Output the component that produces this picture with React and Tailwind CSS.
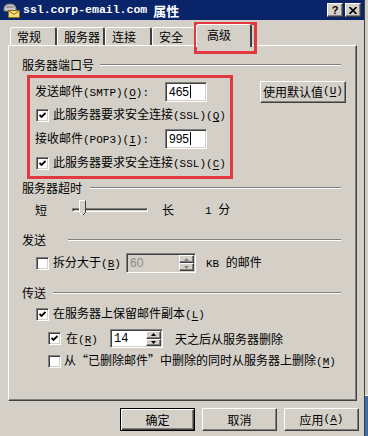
import React from "react";

// classic win9x bevels
const raised =
  "border border-t-white border-l-white border-r-[#404040] border-b-[#404040] shadow-[inset_-1px_-1px_0_#808080]";
const sunken =
  "border border-t-[#808080] border-l-[#808080] border-r-white border-b-white shadow-[inset_1px_1px_0_#404040,inset_-1px_-1px_0_#d4d0c8]";

// "_X" marks an underlined access key, ascii runs get the mono face
const Txt = ({ s }) => {
  const out = [];
  const re = /_(.)|([\x20-\x5e\x60-\x7e]+)|([^\x20-\x7e]+)/g;
  let m;
  let i = 0;
  while ((m = re.exec(s))) {
    if (m[1]) {
      out.push(
        <span key={i++} className="font-['Liberation_Mono'] text-[11px] underline underline-offset-[2px]">
          {m[1]}
        </span>
      );
    } else if (m[2]) {
      out.push(
        <span key={i++} className="font-['Liberation_Mono'] text-[11px]">
          {m[2]}
        </span>
      );
    } else {
      out.push(<span key={i++}>{m[3]}</span>);
    }
  }
  return <>{out}</>;
};

const Check = ({ checked }) => (
  <div className={`w-[13px] h-[13px] shrink-0 bg-white flex items-center justify-center ${sunken}`}>
    {checked && (
      <svg width="7" height="7" viewBox="0 0 7 7">
        <path d="M0.5 3 L2.5 5 L6.5 1" stroke="#000" strokeWidth="1.8" fill="none" />
      </svg>
    )}
  </div>
);

const Header = ({ label, labelClass }) => (
  <div className="h-[14px] flex items-center ml-[13px] mr-[15px]">
    <div className={`${labelClass} shrink-0 leading-[14px] whitespace-nowrap`}>{label}</div>
    <div className="flex-1 h-[2px] border-t border-t-[#808080] border-b border-b-white" />
  </div>
);

const Arrow = ({ up, color }) => (
  <svg width="5" height="3" viewBox="0 0 5 3">
    {up ? <path d="M2.5 0 L5 3 L0 3 Z" fill={color} /> : <path d="M0 0 L5 0 L2.5 3 Z" fill={color} />}
  </svg>
);

const Spin = ({ value, disabled, widthClass, heightClass }) => (
  <div
    className={`${widthClass} ${heightClass} flex items-stretch ${sunken} ${
      disabled ? "bg-[#d4d0c8]" : "bg-white"
    }`}
  >
    <div
      className={`flex-1 flex items-center pl-[3px] font-['Liberation_Mono'] text-[12px] ${
        disabled ? "text-[#8a8a8a] font-['Liberation_Sans']" : "text-black"
      }`}
    >
      {value}
    </div>
    <div className="w-[15px] flex flex-col my-[1px] mr-[1px]">
      <div className={`flex-1 flex items-center justify-center bg-[#d4d0c8] ${raised}`}>
        <Arrow up color={disabled ? "#808080" : "#000"} />
      </div>
      <div className={`flex-1 flex items-center justify-center bg-[#d4d0c8] ${raised}`}>
        <Arrow color={disabled ? "#808080" : "#000"} />
      </div>
    </div>
  </div>
);

const Field = ({ value }) => (
  <div className={`w-[42px] h-[20px] bg-white flex items-center pl-[3px] ${sunken}`}>
    <span className="font-['Liberation_Sans'] text-[12px] leading-none">{value}</span>
    <span className="w-px h-[13px] bg-black ml-px" />
  </div>
);

const tabs = [
  { label: "常规", w: "w-[47px]" },
  { label: "服务器", w: "w-[48px]" },
  { label: "连接", w: "w-[47px]" },
  { label: "安全", w: "w-[46px]" },
];

const App = () => {
  return (
    <div className="relative w-[368px] h-[436px] overflow-hidden flex bg-[#d4d0c8] text-black text-[12px] font-['Noto_Sans_CJK_SC',sans-serif]">
      {/* dialog window */}
      <div className="w-[365px] h-full flex flex-col border-r border-[#404040]">
        {/* title bar */}
        <div className="h-[20px] bg-[#0a246a] flex items-center pl-[3px] pr-[3px]">
          <svg width="18" height="16" viewBox="0 0 18 16">
            <path d="M1 7 Q1 2 7 2 Q13 2 13 7 L13 9 L1 9 Z" fill="#c8c8c8" stroke="#7a7a7a" />
            <rect x="3" y="4" width="8" height="2" fill="#9a9a9a" />
            <rect x="5.5" y="8.5" width="11" height="7" fill="#f3dc7a" stroke="#8a6a20" />
            <path d="M5.5 8.5 L11 12.5 L16.5 8.5" stroke="#8a6a20" fill="none" />
          </svg>
          <div className="ml-[2px] text-white font-bold whitespace-nowrap flex items-center">
            <span className="font-['Liberation_Mono'] text-[11.5px]">ssl.corp-email.com</span>
            <span className="ml-[6px] text-[13px] leading-none">属性</span>
          </div>
          <div className="ml-auto flex gap-[2px]">
            <div className={`w-[16px] h-[14px] bg-[#d4d0c8] flex items-center justify-center ${raised}`}>
              <span className="font-['Liberation_Sans'] font-bold text-[11px] leading-none">?</span>
            </div>
            <div className={`w-[16px] h-[14px] bg-[#d4d0c8] flex items-center justify-center ${raised}`}>
              <svg width="8" height="7" viewBox="0 0 8 7">
                <path d="M0.5 0 L7.5 7 M7.5 0 L0.5 7" stroke="#000" strokeWidth="1.6" />
              </svg>
            </div>
          </div>
        </div>

        {/* tabs */}
        <div className="h-[25px] flex items-end pl-[10px]">
          {tabs.map((t) => (
            <div
              key={t.label}
              className={`${t.w} h-[18px] pl-[6px] flex items-center border-t border-l border-t-white border-l-white border-r-2 border-r-[#404040] rounded-t-[3px] leading-[14px]`}
            >
              {t.label}
            </div>
          ))}
          <div className="relative z-10 -ml-[2px] -mb-[2px] w-[56px] h-[23px] pl-[10px] pt-[3px] bg-[#d4d0c8] border-t border-l border-t-white border-l-white border-r-2 border-r-[#404040] rounded-t-[3px] leading-[14px]">
            高级
          </div>
        </div>

        {/* tab panel */}
        <div className="ml-[8px] w-[349px] h-[356px] border border-t-white border-l-white border-r-[#404040] border-b-[#404040] shadow-[inset_-1px_-1px_0_#808080] flex flex-col pt-[12px]">
          <Header label="服务器端口号" labelClass="w-[78px]" />

          <div className="mt-[9px] h-[21px] flex items-center">
            <div className="ml-[26px] w-[130px] leading-[14px] whitespace-nowrap">
              <Txt s="发送邮件(SMTP)(_O):" />
            </div>
            <Field value="465" />
            <div className={`ml-[53px] w-[86px] h-[22px] flex items-center justify-center whitespace-nowrap ${raised}`}>
              <Txt s="使用默认值(_U)" />
            </div>
          </div>

          <div className="mt-[6px] h-[14px] flex items-center ml-[27px]">
            <Check checked />
            <span className="ml-[4px] leading-[14px] whitespace-nowrap">
              <Txt s="此服务器要求安全连接(SSL)(_Q)" />
            </span>
          </div>

          <div className="mt-[6px] h-[21px] flex items-center">
            <div className="ml-[26px] w-[130px] leading-[14px] whitespace-nowrap">
              <Txt s="接收邮件(POP3)(_I):" />
            </div>
            <Field value="995" />
          </div>

          <div className="mt-[7px] h-[14px] flex items-center ml-[27px]">
            <Check checked />
            <span className="ml-[4px] leading-[14px] whitespace-nowrap">
              <Txt s="此服务器要求安全连接(SSL)(_C)" />
            </span>
          </div>

          <div className="mt-[11px]">
            <Header label="服务器超时" labelClass="w-[68px]" />
          </div>

          <div className="mt-[7px] h-[16px] flex items-center">
            <span className="ml-[26px] leading-[14px]">短</span>
            <div className="relative ml-[25px] w-[76px] h-[16px] flex items-center">
              <div className="w-full h-[4px] border border-t-[#808080] border-l-[#808080] border-r-white border-b-white bg-[#d4d0c8] shadow-[inset_1px_1px_0_#404040]" />
              <svg className="absolute left-[7px] top-[-2px]" width="7" height="16" viewBox="0 0 7 16">
                <path d="M0.5 0.5 L6.5 0.5 L6.5 12.5 L3.5 15.5 L0.5 12.5 Z" fill="#d4d0c8" />
                <path d="M0.5 12.5 L0.5 0.5 L6.5 0.5" stroke="#fff" fill="none" />
                <path d="M6.5 0.5 L6.5 12.5 L3.5 15.5" stroke="#404040" fill="none" />
                <path d="M3.5 15.5 L0.5 12.5" stroke="#fff" fill="none" />
              </svg>
            </div>
            <span className="ml-[14px] leading-[14px]">长</span>
            <span className="ml-[31px] leading-[14px] whitespace-nowrap">
              <Txt s="1 分" />
            </span>
          </div>

          <div className="mt-[15px]">
            <Header label="发送" labelClass="w-[46px]" />
          </div>

          <div className="mt-[6px] h-[20px] flex items-center ml-[27px]">
            <Check />
            <span className="ml-[4px] w-[73px] leading-[14px] whitespace-nowrap">
              <Txt s="拆分大于(_B)" />
            </span>
            <Spin value="60" disabled widthClass="w-[70px]" heightClass="h-[20px]" />
            <span className="ml-[10px] leading-[14px] whitespace-nowrap">
              <Txt s="KB 的邮件" />
            </span>
          </div>

          <div className="mt-[13px]">
            <Header label="传送" labelClass="w-[31px]" />
          </div>

          <div className="mt-[7px] h-[14px] flex items-center ml-[27px]">
            <Check checked />
            <span className="ml-[4px] leading-[14px] whitespace-nowrap">
              <Txt s="在服务器上保留邮件副本(_L)" />
            </span>
          </div>

          <div className="mt-[8px] h-[19px] flex items-center ml-[39px]">
            <Check checked />
            <span className="ml-[5px] w-[44px] leading-[14px] whitespace-nowrap">
              <Txt s="在(_R)" />
            </span>
            <Spin value="14" widthClass="w-[53px]" heightClass="h-[19px]" />
            <span className="ml-[12px] leading-[14px] whitespace-nowrap">天之后从服务器删除</span>
          </div>

          <div className="mt-[6px] h-[14px] flex items-center ml-[39px]">
            <Check />
            <span className="ml-[3px] leading-[14px] whitespace-nowrap">
              <Txt s="从“已删除邮件”中删除的同时从服务器上删除(_M)" />
            </span>
          </div>
        </div>

        {/* dialog buttons */}
        <div className="mt-[7px] ml-[120px] flex gap-[7px]">
          <div className="w-[75px] h-[23px] border border-black shadow-[inset_1px_1px_0_#fff,inset_-1px_-1px_0_#404040,inset_-2px_-2px_0_#808080] flex items-center justify-center">
            确定
          </div>
          <div className={`w-[75px] h-[23px] flex items-center justify-center ${raised}`}>取消</div>
          <div className={`w-[75px] h-[23px] flex items-center justify-center whitespace-nowrap ${raised}`}>
            <Txt s="应用(_A)" />
          </div>
        </div>
      </div>

      {/* sliver of the desktop to the right */}
      <div className="flex-1 flex flex-col">
        <div className="flex-1 bg-[#d4d0c8]" />
        <div className="h-[41px] bg-[#3a6ea5] border-t border-white" />
      </div>

      {/* red annotation boxes */}
      <div className="absolute left-[194px] top-[22px] w-[63px] h-[32px] border-[3px] border-[#e2383f]" />
      <div className="absolute left-[27px] top-[75px] w-[206px] h-[104px] border-[3px] border-[#e2383f]" />
    </div>
  );
};

export default App;
